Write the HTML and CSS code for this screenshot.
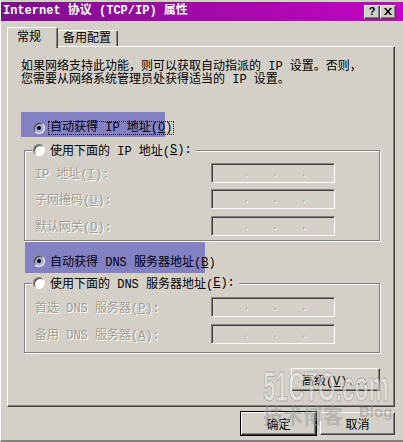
FILE: index.html
```html
<!DOCTYPE html>
<html lang="zh-CN">
<head>
  <meta charset="UTF-8">
  <title>Internet 协议 (TCP/IP) 属性</title>
  <link rel="stylesheet" href="styles.css">
</head>
<body>
  <div class="window">
    <div class="titlebar">
      <span class="title">Internet 协议 (TCP/IP) 属性</span>
      <div class="caption-buttons">
        <span class="cap-btn help">?</span>
        <span class="cap-btn close">
          <svg width="8" height="7" viewBox="0 0 8 7"><path d="M0 0h2l2 2.5L6 0h2L5 3.5 8 7H6L4 4.5 2 7H0l3-3.5z" fill="#000"/></svg>
        </span>
      </div>
    </div>

    <div class="tabs">
      <div class="tab active">常规</div>
      <div class="tab">备用配置</div>
    </div>

    <div class="panel">
      <p class="desc">如果网络支持此功能，则可以获取自动指派的 IP 设置。否则，<br>您需要从网络系统管理员处获得适当的 IP 设置。</p>

      <div class="pick pick-ip">
        <span class="radio checked"></span>
        <span class="focus">自动获得 IP 地址(<u>O</u>)</span>
      </div>

      <div class="group group-ip">
        <div class="group-head"><span class="radio"></span>使用下面的 IP 地址(<u>S</u>):</div>
        <div class="field first"><span class="label">IP 地址(<u>I</u>):</span><span class="ipbox"><i>.</i><i>.</i><i>.</i></span></div>
        <div class="field"><span class="label">子网掩码(<u>U</u>):</span><span class="ipbox"><i>.</i><i>.</i><i>.</i></span></div>
        <div class="field last"><span class="label">默认网关(<u>D</u>):</span><span class="ipbox"><i>.</i><i>.</i><i>.</i></span></div>
      </div>

      <div class="pick pick-dns">
        <span class="radio checked"></span>
        <span class="plain">自动获得 DNS 服务器地址(<u>B</u>)</span>
      </div>

      <div class="group group-dns">
        <div class="group-head"><span class="radio"></span>使用下面的 DNS 服务器地址(<u>E</u>):</div>
        <div class="field first"><span class="label">首选 DNS 服务器(<u>P</u>):</span><span class="ipbox"><i>.</i><i>.</i><i>.</i></span></div>
        <div class="field last"><span class="label">备用 DNS 服务器(<u>A</u>):</span><span class="ipbox"><i>.</i><i>.</i><i>.</i></span></div>
      </div>

      <div class="adv-row">
        <button class="btn adv">高级(<u>V</u>)...</button>
      </div>
    </div>

    <div class="footer">
      <button class="btn default">确定</button>
      <button class="btn">取消</button>
    </div>

    <div class="watermark">
      <span class="wm-site">51CTO.com</span>
      <span class="wm-blog">技术博客</span>
      <span class="wm-tag">Blog</span>
    </div>
  </div>
</body>
</html>
```

FILE: styles.css
```css
body {
  margin: 0;
  font-family: "Liberation Mono", "Noto Sans CJK SC", monospace;
  font-size: 12px;
  color: #000;
  background: #d4d0c8;
}
.window {
  position: relative;
  width: 403px;
  height: 442px;
  box-sizing: border-box;
  background: #d4d0c8;
  border-top: 1px solid #d4d0c8;
  border-left: 1px solid #fff;
  border-bottom: 2px solid #808080;
  overflow: hidden;
}

/* title bar */
.titlebar {
  margin-top: 1px;
  height: 19px;
  display: flex;
  align-items: center;
  justify-content: space-between;
  padding: 0 7px 0 2px;
  background: linear-gradient(90deg, #7d0f8c, #c404c4);
}
.title {
  color: #fff;
  font-weight: bold;
  line-height: 19px;
  white-space: pre;
}
.caption-buttons {
  display: flex;
}
.cap-btn {
  width: 16px;
  height: 14px;
  box-sizing: border-box;
  display: flex;
  align-items: center;
  justify-content: center;
  background: #d4d0c8;
  border: 1px solid;
  border-color: #fff #404040 #404040 #fff;
  box-shadow: inset -1px -1px 0 #808080;
  font-family: "Liberation Sans", sans-serif;
  font-weight: bold;
  font-size: 11px;
  line-height: 1;
}

/* tabs */
.tabs {
  display: flex;
  align-items: flex-end;
  margin: 6px 0 0 6px;
  height: 19px;
}
.tab {
  box-sizing: border-box;
  height: 16px;
  width: 60px;
  padding: 1px 0 0 5px;
  line-height: 14px;
  border-top: 1px solid #fff;
  border-right: 1px solid #404040;
  box-shadow: inset -1px 0 0 #808080;
  border-radius: 2px 2px 0 0;
  background: #d4d0c8;
}
.tab.active {
  position: relative;
  z-index: 1;
  height: 21px;
  width: 51px;
  margin-bottom: -2px;
  padding: 3px 0 0 9px;
  border-left: 1px solid #fff;
}

/* panel */
.panel {
  box-sizing: border-box;
  width: 388px;
  height: 361px;
  margin-left: 6px;
  border: 1px solid;
  border-color: #fff #404040 #404040 #fff;
  box-shadow: inset -1px -1px 0 #808080;
}
.desc {
  margin: 14px 0 0 13px;
  line-height: 13px;
  white-space: nowrap;
}

/* auto options (highlighted) */
.pick {
  display: flex;
  align-items: center;
  height: 14px;
  background: #8381c4;
}
.pick .radio {
  background: #a9a7dc;
}
.pick-ip {
  width: 132px;
  margin: 25px 0 0 13px;
  padding: 9px 0 2px 12px;
}
.pick-dns {
  width: 172px;
  margin: 1px 0 0 17px;
  padding: 12px 0 5px 8px;
}
.focus {
  margin-left: 3px;
  padding: 0 1px;
  border: 1px dotted #000;
  line-height: 12px;
  white-space: pre;
}
.plain {
  margin-left: 5px;
  white-space: pre;
}

/* radio */
.radio {
  position: relative;
  flex: none;
  width: 12px;
  height: 12px;
  box-sizing: border-box;
  border-radius: 50%;
  background: #fff;
  border: 1px solid;
  border-color: #808080 #fff #fff #808080;
  box-shadow: inset 1px 1px 0 #404040;
}
.radio.checked::after {
  content: "";
  position: absolute;
  left: 3px;
  top: 3px;
  width: 4px;
  height: 4px;
  border-radius: 50%;
  background: #000;
}

/* group boxes */
.group {
  box-sizing: border-box;
  width: 356px;
  margin-left: 16px;
  border: 1px solid #808080;
  box-shadow: 1px 1px 0 #fff, inset 1px 1px 0 #fff;
}
.group-ip {
  height: 91px;
  margin-top: 13px;
}
.group-dns {
  height: 70px;
  margin-top: 10px;
}
.group-head {
  display: flex;
  width: max-content;
  align-items: center;
  height: 14px;
  margin: -8px 0 0 7px;
  padding: 0 4px 0 1px;
  background: #d4d0c8;
  white-space: pre;
}
.group-head .radio {
  margin-right: 5px;
}
.field {
  display: flex;
  align-items: center;
  height: 20px;
  padding-left: 10px;
  margin-top: 6px;
}
.group-ip .field.last {
  margin-top: 7px;
}
.group-dns .field.first,
.group-dns .field.last {
  margin-top: 7px;
}
.label {
  width: 176px;
  color: #a09c94;
  text-shadow: 1px 1px 0 #fff;
  white-space: pre;
}
.ipbox {
  box-sizing: border-box;
  width: 124px;
  height: 20px;
  display: flex;
  justify-content: space-around;
  align-items: center;
  padding: 0 16px 0 20px;
  border: 1px solid;
  border-color: #808080 #fff #fff #808080;
  box-shadow: inset 1px 1px 0 #404040;
}
.ipbox i {
  font-style: normal;
  color: #a09c94;
  text-shadow: 1px 1px 0 #fff;
  font-size: 10px;
}

/* buttons */
.btn {
  box-sizing: border-box;
  height: 23px;
  padding: 0;
  font: inherit;
  color: #000;
  background: #d4d0c8;
  border: 1px solid;
  border-color: #fff #404040 #404040 #fff;
  box-shadow: inset -1px -1px 0 #808080;
}
.adv-row {
  display: flex;
  justify-content: flex-end;
  margin: 15px 14px 0 0;
}
.btn.adv {
  width: 89px;
}
.footer {
  display: flex;
  justify-content: flex-end;
  gap: 4px;
  margin: 5px 8px 0 0;
}
.footer .btn {
  width: 75px;
}
.btn.default {
  outline: 1px solid #000;
  outline-offset: 0;
}

/* watermark over the bottom right corner */
.watermark {
  position: absolute;
  left: 262px;
  top: 362px;
  width: 132px;
  height: 72px;
  pointer-events: none;
  font-family: "Liberation Sans", sans-serif;
  font-weight: bold;
}
.wm-site {
  position: absolute;
  left: 0;
  top: 0;
  font-size: 42px;
  white-space: nowrap;
  transform: scaleX(0.54);
  transform-origin: left top;
  color: rgba(240, 240, 240, 0.5);
  -webkit-text-stroke: 1px rgba(120, 120, 120, 0.45);
}
.wm-blog {
  position: absolute;
  left: 0;
  top: 40px;
  font-family: "Noto Sans CJK SC", sans-serif;
  font-size: 20px;
  line-height: 26px;
  color: rgba(150, 150, 150, 0.5);
}
.wm-tag {
  position: absolute;
  left: 96px;
  top: 40px;
  font-size: 15px;
  color: rgba(150, 150, 150, 0.55);
}
```
